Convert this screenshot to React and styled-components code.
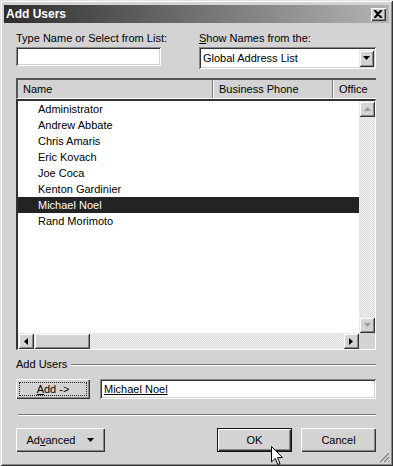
import React from "react";
import styled, { createGlobalStyle } from "styled-components";

const Global = createGlobalStyle`
  html, body { margin: 0; padding: 0; background: #d3d3d3; }
  * { box-sizing: border-box; }
`;

const Window = styled.div`
  position: relative;
  width: 393px;
  height: 466px;
  background: #d3d3d3;
  padding: 4px 4px 4px 4px;
  font-family: "Liberation Sans", Arial, sans-serif;
  font-size: 11px;
  color: #000;
  box-shadow: inset 1px 1px #e2e2e2, inset -1px -1px #333, inset 2px 2px #fff, inset -2px -2px #888;
  display: flex;
  flex-direction: column;
`;

const TitleBar = styled.div`
  height: 18px;
  margin-top: 1px;
  background: linear-gradient(to right, #2e2e2e 0%, #6a6a6a 45%, #b4b4b4 100%);
  display: flex;
  align-items: center;
  justify-content: space-between;
  padding: 0 3px 0 2px;
`;

const Title = styled.span`
  color: #fff;
  font-weight: bold;
  font-size: 12px;
`;

const CloseBox = styled.div`
  width: 15px;
  height: 13px;
  background: #d3d3d3;
  box-shadow: inset 1px 1px #fff, inset -1px -1px #333, inset -2px -2px #888;
  display: flex;
  align-items: center;
  justify-content: center;
`;

const Content = styled.div`
  flex: 1;
  display: flex;
  flex-direction: column;
  padding: 8px 13px 0 12px;
`;

const TopRow = styled.div`
  display: grid;
  grid-template-columns: 145px 1fr;
  column-gap: 38px;
  align-items: start;
`;

const Field = styled.div`
  display: flex;
  flex-direction: column;
  gap: 2px;
`;

const Label = styled.span`
  line-height: 14px;
  white-space: nowrap;
`;

const Sunken = styled.div`
  background: #fff;
  height: ${p => p.h || 19}px;
  box-shadow: inset 1px 1px #888, inset -1px -1px #fff, inset 2px 2px #333, inset -2px -2px #d3d3d3;
  display: flex;
  align-items: center;
  padding: 0 4px;
  white-space: nowrap;
`;

const SelectBox = styled(Sunken)`
  justify-content: space-between;
  padding: 2px 2px 2px 4px;
`;

const ArrowBtn = styled.div`
  width: ${p => p.w || 16}px;
  height: ${p => p.hh || 16}px;
  background: #d3d3d3;
  box-shadow: inset 1px 1px #e8e8e8, inset -1px -1px #333, inset 2px 2px #fff, inset -2px -2px #888;
  display: flex;
  align-items: center;
  justify-content: center;
  flex-shrink: 0;
`;

const Header = styled.div`
  margin-top: 9px;
  height: 21px;
  display: grid;
  grid-template-columns: 195px 120px 1fr;
  border-left: 2px solid #555;
  border-top: 2px solid #555;
  border-bottom: 1px solid #fff;
  background: #d3d3d3;
`;

const HeadCell = styled.div`
  padding-left: ${p => p.pl || 5}px;
  display: flex;
  align-items: center;
  border-right: ${p => (p.last ? "none" : "1px solid #777")};
  box-shadow: ${p => (p.last ? "none" : "1px 0 #fff")};
`;

const ListFrame = styled.div`
  margin-top: 0;
  height: 251px;
  background: #fff;
  border-top: 2px solid #333;
  border-left: 2px solid #333;
  border-right: 1px solid #fff;
  border-bottom: 1px solid #fff;
  display: grid;
  grid-template-columns: 1fr 16px;
  grid-template-rows: 1fr 16px;
`;

const Rows = styled.div`
  overflow: hidden;
`;

const Row = styled.div`
  height: 16px;
  line-height: 16px;
  padding-left: 20px;
  background: ${p => (p.selected ? "#232323" : "transparent")};
  color: ${p => (p.selected ? "#fff" : "#000")};
`;

const VTrack = styled.div`
  display: flex;
  flex-direction: column;
  justify-content: space-between;
  background: repeating-conic-gradient(#f0f0f0 0 25%, #dcdcdc 0 50%) 0 0 / 2px 2px;
`;

const HTrack = styled.div`
  display: flex;
  justify-content: space-between;
  align-items: stretch;
  background: repeating-conic-gradient(#f0f0f0 0 25%, #dcdcdc 0 50%) 0 0 / 2px 2px;
`;

const Thumb = styled(ArrowBtn)`
  width: 56px;
  margin-right: auto;
`;

const Corner = styled.div`
  background: #d3d3d3;
`;

const GroupHead = styled.div`
  margin-top: 7px;
  display: flex;
  align-items: center;
  gap: 4px;
  line-height: 14px;
  &::after {
    content: "";
    flex: 1;
    height: 1px;
    background: #777;
    box-shadow: 0 1px #fff;
  }
`;

const AddRow = styled.div`
  margin-top: 8px;
  display: grid;
  grid-template-columns: 74px 1fr;
  column-gap: 10px;
`;

const Button = styled.div`
  height: ${p => p.h || 20}px;
  width: ${p => (p.w ? p.w + "px" : "auto")};
  background: #d3d3d3;
  box-shadow: ${p =>
    p.default
      ? "inset 0 0 0 1px #111, inset 2px 2px #fff, inset -2px -2px #333, inset -3px -3px #888"
      : "inset 1px 1px #fff, inset -1px -1px #333, inset -2px -2px #888"};
  display: flex;
  align-items: center;
  justify-content: center;
  gap: 12px;
  padding: 3px;
`;

const Focus = styled.span`
  flex: 1;
  align-self: stretch;
  display: flex;
  align-items: center;
  justify-content: center;
  border: 1px dotted #222;
`;

const Underlined = styled.span`
  text-decoration: underline;
`;

const Separator = styled.div`
  margin: 15px 0 0 2px;
  height: 1px;
  background: #777;
  box-shadow: 0 1px #fff;
`;

const ButtonRow = styled.div`
  margin-top: 13px;
  display: flex;
  align-items: center;
  gap: 9px;
  & > :first-child {
    margin-right: auto;
  }
`;

const Grip = styled.svg`
  position: absolute;
  right: 3px;
  bottom: 3px;
`;

const Cursor = styled.svg`
  position: absolute;
  left: 271px;
  top: 446px;
`;

const Tri = ({ dir = "down", color = "#000" }) => {
  const pts = {
    down: "0,0 7,0 3.5,4",
    up: "0,4 7,4 3.5,0",
    left: "4,0 4,7 0,3.5",
    right: "0,0 0,7 4,3.5",
  }[dir];
  const vertical = dir === "up" || dir === "down";
  return (
    <svg width={vertical ? 7 : 4} height={vertical ? 4 : 7}>
      <polygon points={pts} fill={color} />
    </svg>
  );
};

const names = [
  "Administrator",
  "Andrew Abbate",
  "Chris Amaris",
  "Eric Kovach",
  "Joe Coca",
  "Kenton Gardinier",
  "Michael Noel",
  "Rand Morimoto",
];

export default function App() {
  return (
    <>
      <Global />
      <Window>
        <TitleBar>
          <Title>Add Users</Title>
          <CloseBox>
            <svg width="9" height="8">
              <path d="M1 0 L8 8 M8 0 L1 8 M0 0 L7 8 M7 0 L0 8" stroke="#000" strokeWidth="1.3" />
            </svg>
          </CloseBox>
        </TitleBar>
        <Content>
          <TopRow>
            <Field>
              <Label>Type Name or Select from List:</Label>
              <Sunken h={19} />
            </Field>
            <Field>
              <Label><u>S</u>how Names from the:</Label>
              <SelectBox h={22}>
                Global Address List
                <ArrowBtn w={15} hh={17}><Tri /></ArrowBtn>
              </SelectBox>
            </Field>
          </TopRow>

          <Header>
            <HeadCell>Name</HeadCell>
            <HeadCell pl={6}>Business Phone</HeadCell>
            <HeadCell pl={6} last>Office</HeadCell>
          </Header>
          <ListFrame>
            <Rows>
              {names.map(n => (
                <Row key={n} selected={n === "Michael Noel"}>{n}</Row>
              ))}
            </Rows>
            <VTrack>
              <ArrowBtn><Tri dir="up" color="#999" /></ArrowBtn>
              <ArrowBtn><Tri dir="down" color="#999" /></ArrowBtn>
            </VTrack>
            <HTrack>
              <ArrowBtn><Tri dir="left" /></ArrowBtn>
              <Thumb />
              <ArrowBtn><Tri dir="right" /></ArrowBtn>
            </HTrack>
            <Corner />
          </ListFrame>

          <GroupHead>Add Users</GroupHead>
          <AddRow>
            <Button>
              <Focus><Underlined>A</Underlined>dd -&gt;</Focus>
            </Button>
            <Sunken h={20}><Underlined>Michael Noel</Underlined></Sunken>
          </AddRow>

          <Separator />

          <ButtonRow>
            <Button w={89} h={24}>
              <span>Ad<u>v</u>anced</span>
              <Tri />
            </Button>
            <Button w={75} h={24} default>OK</Button>
            <Button w={75} h={24}>Cancel</Button>
          </ButtonRow>
        </Content>
        <Grip width="12" height="12">
          <path d="M11 1 L1 11 M11 5 L5 11 M11 9 L9 11" stroke="#fff" strokeWidth="1" />
          <path d="M11 2 L2 11 M11 6 L6 11 M11 10 L10 11" stroke="#777" strokeWidth="1.2" />
        </Grip>
        <Cursor width="13" height="21" viewBox="0 0 13 21">
          <path d="M0.5 0.5 L0.5 16 L4.2 12.4 L6.8 18.5 L9 17.6 L6.5 11.6 L11.5 11.6 Z" fill="#fff" stroke="#000" strokeWidth="1" />
        </Cursor>
      </Window>
    </>
  );
}
